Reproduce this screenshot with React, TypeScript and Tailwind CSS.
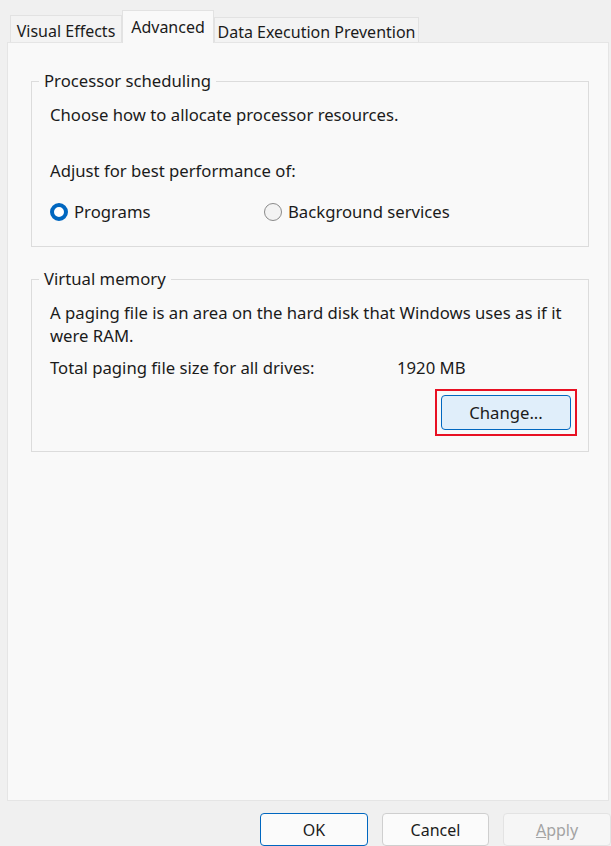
import React from 'react';

const font = { fontFamily: '"Noto Sans", "Open Sans", sans-serif' };

function Radio({ checked, label }: { checked?: boolean; label: string }) {
  return (
    <label className="flex items-center gap-[6px]">
      {checked ? (
        <span className="w-[18px] h-[18px] rounded-full border-[4px] border-[#0067c0] bg-white" />
      ) : (
        <span className="w-[18px] h-[18px] rounded-full border border-[#8a8a8a] bg-[#f3f3f3]" />
      )}
      <span>{label}</span>
    </label>
  );
}

function Group({ title, className, children }: { title: string; className?: string; children: React.ReactNode }) {
  return (
    <fieldset className={`border border-[#dcdcdc] px-[18px] ${className ?? ''}`}>
      <legend className="ml-[-11px] px-[5px] leading-[22px]">{title}</legend>
      {children}
    </fieldset>
  );
}

export default function App() {
  return (
    <div
      className="w-[611px] h-[846px] bg-[#f0f0f0] overflow-hidden flex flex-col text-[16.7px] text-[#1b1b1b]"
      style={font}
    >
      {/* Tabs */}
      <div className="flex items-end pl-[10px] pt-[10px] h-[42px] relative z-10 text-[16px]">
        <div className="w-[112px] h-[27px] pt-[4px] flex items-center justify-center border border-b-0 border-[#e2e2e2] bg-[#f3f3f3]">
          Visual Effects
        </div>
        <div className="w-[92px] h-[33px] mb-[-1px] flex items-center justify-center border border-b-0 border-[#e2e2e2] bg-[#f9f9f9]">
          Advanced
        </div>
        <div className="w-[205px] h-[25px] pt-[3px] flex items-center justify-center border border-b-0 border-[#e2e2e2] bg-[#f3f3f3]">
          Data Execution Prevention
        </div>
      </div>

      {/* Panel */}
      <div className="ml-[7px] w-[602px] h-[759px] border border-[#e5e5e5] bg-[#f9f9f9] pl-[23px] pr-[19px] pt-[27px] flex flex-col gap-[21px]">
        <Group title="Processor scheduling" className="pb-[22px]">
          <p className="mt-[12px] leading-[22px]">Choose how to allocate processor resources.</p>
          <p className="mt-[34px] leading-[22px]">Adjust for best performance of:</p>
          <div className="mt-[17px] flex">
            <div className="w-[214px]">
              <Radio checked label="Programs" />
            </div>
            <Radio label="Background services" />
          </div>
        </Group>

        <Group title="Virtual memory" className="pb-[15px]">
          <p className="mt-[11px] leading-[23px]">
            A paging file is an area on the hard disk that Windows uses as if it were RAM.
          </p>
          <div className="mt-[10px] flex leading-[22px]">
            <span className="w-[347px]">Total paging file size for all drives:</span>
            <span>1920 MB</span>
          </div>
          <div className="mt-[10px] flex justify-end mr-[-7px]">
            <div className="border-2 border-[#e81123] p-[4px]">
              <button className="w-[130px] h-[35px] rounded-[4px] border border-[#0067c0] bg-[#e0eefa]">
                Change...
              </button>
            </div>
          </div>
        </Group>
      </div>

      {/* Buttons */}
      <div className="flex pl-[260px] gap-[14px] mt-[12px] text-[16px]">
        <button className="w-[108px] h-[33px] shrink-0 rounded-[4px] border border-[#0067c0] bg-[#fbfbfb]">OK</button>
        <button className="w-[107px] h-[33px] shrink-0 rounded-[4px] border border-[#cfcfcf] bg-[#fbfbfb]">Cancel</button>
        <button className="w-[108px] h-[33px] shrink-0 rounded-[4px] border border-[#e3e3e3] bg-[#f6f6f6] text-[#a3a3a3]">
          <span className="underline">A</span>pply
        </button>
      </div>
    </div>
  );
}
